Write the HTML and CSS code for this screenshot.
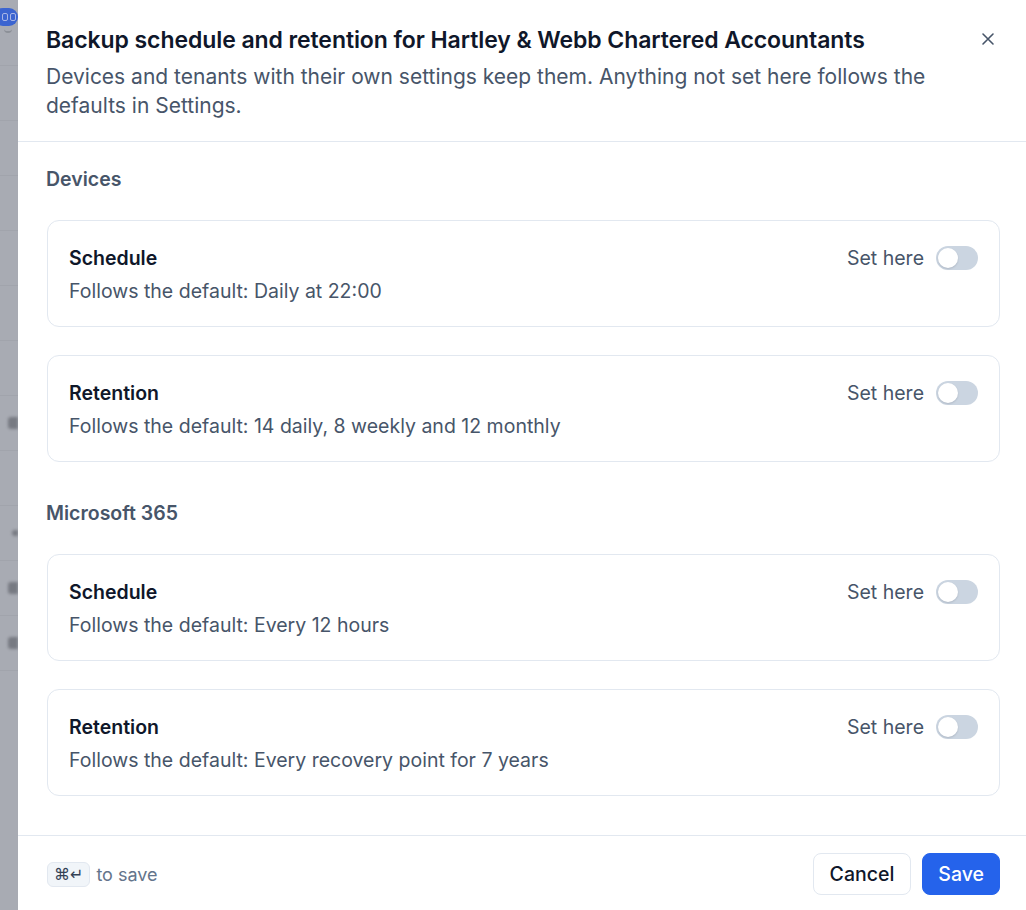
FILE: index.html
```html
<!DOCTYPE html>
<html lang="en">
<head>
<meta charset="utf-8">
<title>Backup schedule and retention</title>
<link rel="stylesheet" href="styles.css">
</head>
<body>
<div class="screen">
  <div class="backdrop" aria-hidden="true">
    <div class="bd-pill"><span class="bd-dot"></span><span class="bd-dot"></span></div>
    <div class="bd-caret"></div>
    <div class="bd-row"></div>
    <div class="bd-row"></div>
    <div class="bd-row"></div>
    <div class="bd-row"></div>
    <div class="bd-row"></div>
    <div class="bd-row"></div>
    <div class="bd-row"></div>
    <div class="bd-row"><span class="bd-blob"></span></div>
    <div class="bd-row"></div>
    <div class="bd-row"><span class="bd-blob bd-blob-sm"></span></div>
    <div class="bd-row"><span class="bd-blob"></span></div>
    <div class="bd-row"><span class="bd-blob"></span></div>
  </div>
  <div class="panel" role="dialog" aria-labelledby="dlg-title">
    <header class="panel-header">
      <div class="header-text">
        <h1 id="dlg-title" class="panel-title">Backup schedule and retention for Hartley &amp; Webb Chartered Accountants</h1>
        <p class="panel-desc">Devices and tenants with their own settings keep them. Anything not set here follows the defaults in Settings.</p>
      </div>
      <button class="close-btn" aria-label="Close">
        <svg width="14" height="14" viewBox="0 0 14 14" fill="none" stroke="currentColor" stroke-width="1.6" stroke-linecap="round"><path d="M2 2l10 10M12 2L2 12"/></svg>
      </button>
    </header>

    <div class="panel-body">
      <section class="group">
        <h2 class="group-title">Devices</h2>
        <div class="card">
          <div class="card-main">
            <div class="card-title">Schedule</div>
            <div class="card-desc">Follows the default: Daily at 22:00</div>
          </div>
          <label class="set-here">Set here <span class="switch"><span class="knob"></span></span></label>
        </div>
        <div class="card">
          <div class="card-main">
            <div class="card-title">Retention</div>
            <div class="card-desc">Follows the default: 14 daily, 8 weekly and 12 monthly</div>
          </div>
          <label class="set-here">Set here <span class="switch"><span class="knob"></span></span></label>
        </div>
      </section>

      <section class="group">
        <h2 class="group-title">Microsoft 365</h2>
        <div class="card">
          <div class="card-main">
            <div class="card-title">Schedule</div>
            <div class="card-desc">Follows the default: Every 12 hours</div>
          </div>
          <label class="set-here">Set here <span class="switch"><span class="knob"></span></span></label>
        </div>
        <div class="card">
          <div class="card-main">
            <div class="card-title">Retention</div>
            <div class="card-desc">Follows the default: Every recovery point for 7 years</div>
          </div>
          <label class="set-here">Set here <span class="switch"><span class="knob"></span></span></label>
        </div>
      </section>
    </div>

    <footer class="panel-footer">
      <div class="hint"><kbd class="kbd">⌘↵</kbd> to save</div>
      <div class="actions">
        <button class="btn btn-secondary">Cancel</button>
        <button class="btn btn-primary">Save</button>
      </div>
    </footer>
  </div>
</div>
</body>
</html>
```

FILE: styles.css
```css
* { box-sizing: border-box; }

html, body {
  margin: 0;
  padding: 0;
  height: 100%;
  overflow: hidden;
}

body {
  font-family: Inter, "Noto Sans", "Liberation Sans", sans-serif;
  color: #0f172a;
  background: #a9acb4;
}

.screen {
  display: flex;
  align-items: stretch;
  width: 1026px;
  min-height: 910px;
}

.backdrop {
  width: 18px;
  flex: none;
  background: #a8abb3;
  overflow: hidden;
  display: flex;
  flex-direction: column;
  padding-top: 8px;
}

.bd-pill {
  width: 24px;
  height: 18px;
  margin-left: -6px;
  border-radius: 9px;
  background: #3b64d0;
  display: flex;
  align-items: center;
  justify-content: flex-end;
  gap: 2px;
  padding-right: 2px;
  filter: blur(0.5px);
}

.bd-dot {
  width: 6px;
  height: 8px;
  border-radius: 2px;
  border: 1.5px solid #a9b6e6;
}

.bd-caret {
  width: 8px;
  height: 4px;
  margin: 3px 0 0 4px;
  border-bottom: 2px solid #8c9098;
  border-radius: 0 0 4px 4px;
  filter: blur(0.6px);
}

.bd-row {
  height: 55px;
  flex: none;
  border-bottom: 1px solid #a1a4ac;
  display: flex;
  align-items: center;
  justify-content: flex-end;
}

.bd-row:nth-child(3) { height: 33px; }

.bd-blob {
  width: 10px;
  height: 12px;
  border-radius: 3px 0 0 3px;
  background: #6b6e76;
  filter: blur(1.5px);
  opacity: 0.8;
}

.bd-blob-sm {
  width: 6px;
  height: 6px;
}

.panel {
  flex: 1;
  background: #ffffff;
  display: flex;
  flex-direction: column;
  min-width: 0;
}

.panel-header {
  display: flex;
  align-items: flex-start;
  gap: 18px;
  padding: 25px 24px 21px 28px;
  border-bottom: 1px solid #e2e8f0;
}

.header-text { flex: 1; }

.panel-title {
  margin: 0;
  font-size: 23px;
  line-height: 30px;
  font-weight: 600;
  color: #0f172a;
  letter-spacing: -0.08px;
}

.panel-desc {
  margin: 7px 0 0;
  font-size: 21px;
  line-height: 29px;
  color: #475569;
}

.close-btn {
  border: 0;
  background: transparent;
  color: #475569;
  padding: 0;
  width: 28px;
  height: 28px;
  margin-top: 0;
  display: flex;
  align-items: center;
  justify-content: center;
  cursor: pointer;
}

.panel-body {
  padding: 25px 26px 39px 28px;
  display: flex;
  flex-direction: column;
  gap: 39px;
}

.group {
  display: flex;
  flex-direction: column;
  gap: 28px;
}

.group-title {
  margin: 0 0 1px;
  font-size: 19.5px;
  line-height: 24px;
  font-weight: 600;
  color: #475569;
}

.card {
  border: 1px solid #e2e8f0;
  border-radius: 12px;
  padding: 23px 21px 21px 21px;
  display: flex;
  align-items: flex-start;
  justify-content: space-between;
  gap: 16px;
  margin-left: 1px;
}

.card-title {
  font-size: 19.5px;
  line-height: 28px;
  font-weight: 600;
  color: #0f172a;
}

.card-desc {
  margin-top: 5px;
  font-size: 19.5px;
  line-height: 28px;
  color: #475569;
}

.set-here {
  display: flex;
  align-items: center;
  gap: 12px;
  font-size: 19.5px;
  line-height: 28px;
  color: #475569;
  white-space: nowrap;
}

.switch {
  width: 42px;
  height: 24px;
  border-radius: 12px;
  background: #cbd5e1;
  padding: 2px;
  display: flex;
  align-items: center;
}

.knob {
  width: 20px;
  height: 20px;
  border-radius: 50%;
  background: #ffffff;
  box-shadow: 0 1px 2px rgba(15, 23, 42, 0.15);
}

.panel-footer {
  display: flex;
  align-items: center;
  justify-content: space-between;
  padding: 17px 26px 20px 28px;
  border-top: 1px solid #e2e8f0;
}

.hint {
  display: flex;
  align-items: center;
  gap: 6px;
  font-size: 18px;
  color: #64748b;
}

.kbd {
  font-family: "DejaVu Sans", Inter, sans-serif;
  font-size: 16px;
  line-height: 23px;
  height: 25px;
  padding: 0 6px;
  margin-left: 1px;
  border: 1px solid #e2e8f0;
  border-radius: 6px;
  background: #f1f5f9;
  color: #334155;
}

.actions {
  display: flex;
  gap: 11px;
}

.btn {
  font-family: inherit;
  font-size: 19.5px;
  font-weight: 500;
  height: 42px;
  border-radius: 8px;
  padding: 0 15px;
  cursor: pointer;
}

.btn-secondary {
  background: #ffffff;
  border: 1px solid #e2e8f0;
  color: #0f172a;
  padding: 0 16px;
}

.btn-primary {
  background: #2563eb;
  border: 1px solid #2563eb;
  color: #ffffff;
}
```
